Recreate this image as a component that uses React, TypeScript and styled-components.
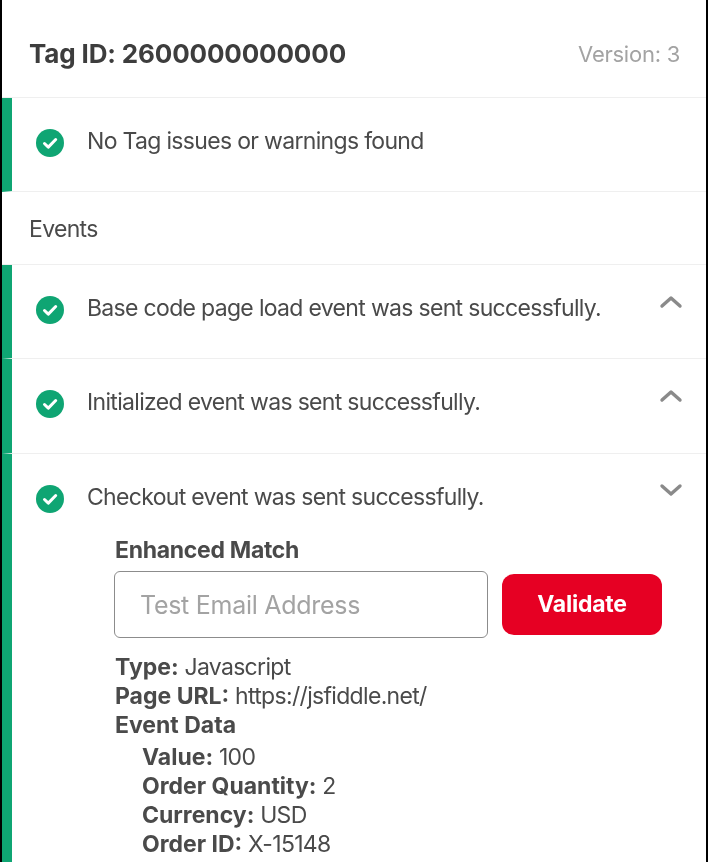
import styled, { createGlobalStyle } from "styled-components"

const GlobalStyle = createGlobalStyle`
    html, body {
        margin: 0;
        padding: 0;
        background: #fff;
    }
    * {
        box-sizing: border-box;
    }
`

const Frame = styled.div`
    width: 708px;
    height: 862px;
    overflow: hidden;
    background: #fff;
    border-left: 2px solid #000;
    border-right: 2px solid #000;
    font-family: Inter, "Liberation Sans", sans-serif;
    color: #4a4a4a;
    font-size: 23px;
    letter-spacing: -0.68px;
    filter: blur(0.5px);
`

const Header = styled.header`
    height: 98px;
    padding: 10px 26px 0 27px;
    display: flex;
    align-items: center;
    justify-content: space-between;
    border-bottom: 1px solid #efefef;
`

const Title = styled.h1`
    margin: 0;
    font-size: 26px;
    font-weight: 700;
    letter-spacing: -0.15px;
    color: #3d3d3d;
`

const Version = styled.span`
    font-size: 22px;
    letter-spacing: -0.25px;
    color: #a3a3a3;
`

const Row = styled.div<{ $height: number }>`
    display: flex;
    flex-direction: column;
    border-left: 10px solid #0fa573;
    border-bottom: 1px solid #efefef;
    height: ${(p) => p.$height}px;
    padding: 0 23px 0 24px;
`

const RowHead = styled.div`
    height: 90px;
    flex: none;
    display: flex;
    align-items: center;
    gap: 23px;
`

const Message = styled.span`
    flex: 1;
    padding-bottom: 4px;
`

const Chevron = styled.svg`
    width: 24px;
    height: 24px;
    margin-top: -18px;
    flex: none;
`

const SectionLabel = styled.div`
    height: 73px;
    padding: 2px 0 0 27px;
    display: flex;
    align-items: center;
    border-bottom: 1px solid #efefef;
`

const Details = styled.div`
    margin-top: -8px;
    padding-left: 78px;
    line-height: 29px;
`

const Heading = styled.div`
    padding-left: 1px;
    font-weight: 700;
    letter-spacing: -0.3px;
`

const FormRow = styled.div`
    display: flex;
    align-items: center;
    gap: 14px;
    margin: 6px 0 15px;
`

const EmailInput = styled.input`
    width: 374px;
    height: 67px;
    padding: 0 25px;
    border: 1px solid #8c8c8c;
    border-radius: 6px;
    font: inherit;
    font-size: 25px;
    letter-spacing: -0.28px;
    &::placeholder {
        color: #a3a3a3;
        opacity: 1;
    }
`

const ValidateButton = styled.button`
    width: 160px;
    height: 61px;
    border: 0;
    border-radius: 12px;
    background: #e60023;
    color: #fff;
    font: inherit;
    font-weight: 700;
    letter-spacing: -0.25px;
`

const Line = styled.div<{ $nested?: boolean }>`
    padding-left: ${(p) => (p.$nested ? "28px" : "1px")};
    b {
        font-weight: 700;
        letter-spacing: 0;
    }
`

const Nested = styled.div`
    margin-top: 3px;
`

const CheckIcon = () => (
    <svg width="28" height="28" viewBox="0 0 28 28" style={{ flex: "none" }}>
        <circle cx="14" cy="14" r="14" fill="#0fa573" />
        <path d="M8.5 14.5l3.8 3.6 7.4-7.6" fill="none" stroke="#fff" strokeWidth="3" strokeLinecap="round" strokeLinejoin="round" />
    </svg>
)

const ChevronIcon = ({ up }: { up?: boolean }) => (
    <Chevron viewBox="0 0 24 24">
        <path
            d={up ? "M3 17l9-8 9 8" : "M3 8l9 8 9-8"}
            fill="none"
            stroke="#8a8a8a"
            strokeWidth="3.4"
            strokeLinecap="round"
            strokeLinejoin="round"
        />
    </Chevron>
)

const App = () => {
    return (
        <Frame>
            <GlobalStyle />
            <Header>
                <Title>Tag ID: 2600000000000</Title>
                <Version>Version: 3</Version>
            </Header>
            <Row $height={94}>
                <RowHead>
                    <CheckIcon />
                    <Message>No Tag issues or warnings found</Message>
                </RowHead>
            </Row>
            <SectionLabel>Events</SectionLabel>
            <Row $height={94}>
                <RowHead>
                    <CheckIcon />
                    <Message>Base code page load event was sent successfully.</Message>
                    <ChevronIcon up />
                </RowHead>
            </Row>
            <Row $height={95}>
                <RowHead>
                    <CheckIcon />
                    <Message>Initialized event was sent successfully.</Message>
                    <ChevronIcon up />
                </RowHead>
            </Row>
            <Row $height={420}>
                <RowHead>
                    <CheckIcon />
                    <Message>Checkout event was sent successfully.</Message>
                    <ChevronIcon />
                </RowHead>
                <Details>
                    <Heading>Enhanced Match</Heading>
                    <FormRow>
                        <EmailInput placeholder="Test Email Address" />
                        <ValidateButton>Validate</ValidateButton>
                    </FormRow>
                    <Line><b>Type:</b> Javascript</Line>
                    <Line><b>Page URL:</b> https://jsfiddle.net/</Line>
                    <Line><b>Event Data</b></Line>
                    <Nested>
                        <Line $nested><b>Value:</b> 100</Line>
                        <Line $nested><b>Order Quantity:</b> 2</Line>
                        <Line $nested><b>Currency:</b> USD</Line>
                        <Line $nested><b>Order ID:</b> X-15148</Line>
                    </Nested>
                </Details>
            </Row>
        </Frame>
    )
}

export default App
